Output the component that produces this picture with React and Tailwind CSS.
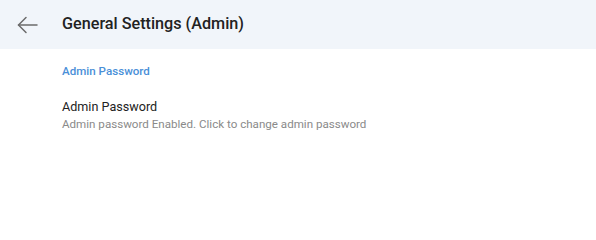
export default function App() {
  return (
    <div className="w-[596px] h-[237px] bg-white" style={{ fontFamily: "Roboto, sans-serif" }}>
      <div className="h-[49px] bg-[#f1f5fa] flex items-center">
        <div className="w-[62px] flex items-center pl-[17px]">
          <svg width="21" height="18" viewBox="0 0 21 18" fill="none" stroke="#6b6b6b" strokeWidth="1.5" strokeLinecap="round" strokeLinejoin="round">
            <path d="M20 9H1.5" />
            <path d="M9 1.5L1.5 9 9 16.5" />
          </svg>
        </div>
        <div className="text-[16.2px] font-medium text-[#222]">General Settings (Admin)</div>
      </div>
      <div className="pl-[62px]">
        <div className="pt-[15px] text-[11.6px] font-medium text-[#4a8fd8] leading-[14px]">Admin Password</div>
        <div className="pt-[21px]">
          <div className="text-[12.6px] text-[#222] leading-[16px]">Admin Password</div>
          <div className="text-[11.6px] text-[#8a8a8a] leading-[16px] mt-[1px]">Admin password Enabled. Click to change admin password</div>
        </div>
      </div>
    </div>
  );
}
